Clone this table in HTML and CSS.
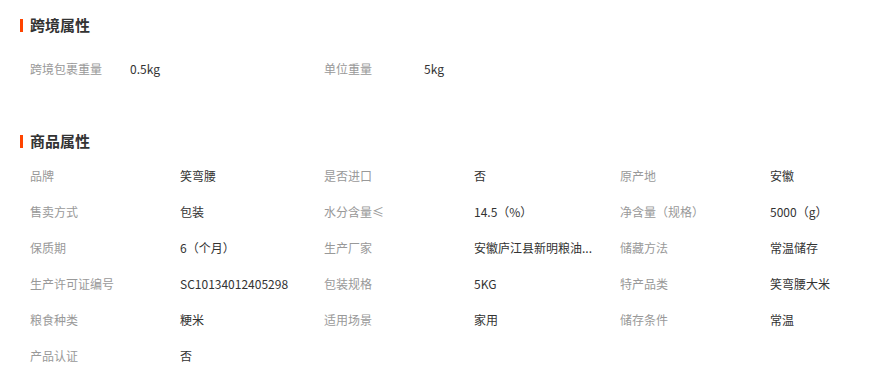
FILE: index.html
```html
<!DOCTYPE html>
<html lang="zh-CN">
<head>
<meta charset="utf-8">
<title>属性</title>
<link rel="stylesheet" href="styles.css">
</head>
<body>
<div class="page">
  <section class="block block-cross">
    <h2 class="title"><span class="bar"></span>跨境属性</h2>
    <ul class="attrs attrs-cross">
      <li class="attr"><span class="label">跨境包裹重量</span><span class="value">0.5kg</span></li>
      <li class="attr"><span class="label">单位重量</span><span class="value">5kg</span></li>
    </ul>
  </section>
  <section class="block block-goods">
    <h2 class="title"><span class="bar"></span>商品属性</h2>
    <ul class="attrs attrs-goods">
      <li class="attr"><span class="label">品牌</span><span class="value">笑弯腰</span></li>
      <li class="attr"><span class="label">是否进口</span><span class="value">否</span></li>
      <li class="attr"><span class="label">原产地</span><span class="value">安徽</span></li>
      <li class="attr"><span class="label">售卖方式</span><span class="value">包装</span></li>
      <li class="attr"><span class="label">水分含量≤</span><span class="value">14.5（%）</span></li>
      <li class="attr"><span class="label">净含量（规格）</span><span class="value">5000（g）</span></li>
      <li class="attr"><span class="label">保质期</span><span class="value">6（个月）</span></li>
      <li class="attr"><span class="label">生产厂家</span><span class="value">安徽庐江县新明粮油...</span></li>
      <li class="attr"><span class="label">储藏方法</span><span class="value">常温储存</span></li>
      <li class="attr"><span class="label">生产许可证编号</span><span class="value">SC10134012405298</span></li>
      <li class="attr"><span class="label">包装规格</span><span class="value">5KG</span></li>
      <li class="attr"><span class="label">特产品类</span><span class="value">笑弯腰大米</span></li>
      <li class="attr"><span class="label">粮食种类</span><span class="value">粳米</span></li>
      <li class="attr"><span class="label">适用场景</span><span class="value">家用</span></li>
      <li class="attr"><span class="label">储存条件</span><span class="value">常温</span></li>
      <li class="attr"><span class="label">产品认证</span><span class="value">否</span></li>
    </ul>
  </section>
</div>
</body>
</html>
```
FILE: styles.css
```css
html, body {
  margin: 0;
  padding: 0;
  background: #fff;
}
body {
  font-family: "Noto Sans CJK SC", "Liberation Sans", sans-serif;
  font-size: 12px;
  color: #333;
}
.page {
  padding: 15px 0 0 20px;
}
.title {
  display: flex;
  align-items: center;
  margin: 0;
  height: 20px;
  line-height: 20px;
  font-size: 15px;
  font-weight: bold;
  color: #333;
}
.bar {
  width: 3px;
  height: 13px;
  background: #ff4400;
  margin-right: 7px;
}
.attrs {
  list-style: none;
  margin: 0;
  padding: 0 0 0 10px;
  display: grid;
}
.block-cross .attrs {
  margin-top: 16px;
  grid-template-columns: 294px 294px;
}
.block-goods {
  margin-top: 44px;
}
.block-goods .attrs {
  margin-top: 7px;
  grid-template-columns: 294px 296px 250px;
}
.attr {
  display: flex;
  height: 36px;
  line-height: 36px;
  white-space: nowrap;
}
.label {
  color: #999;
  flex: none;
}
.attrs-cross .label {
  width: 100px;
}
.attrs-goods .label {
  width: 150px;
}
.value {
  color: #333;
}
```
